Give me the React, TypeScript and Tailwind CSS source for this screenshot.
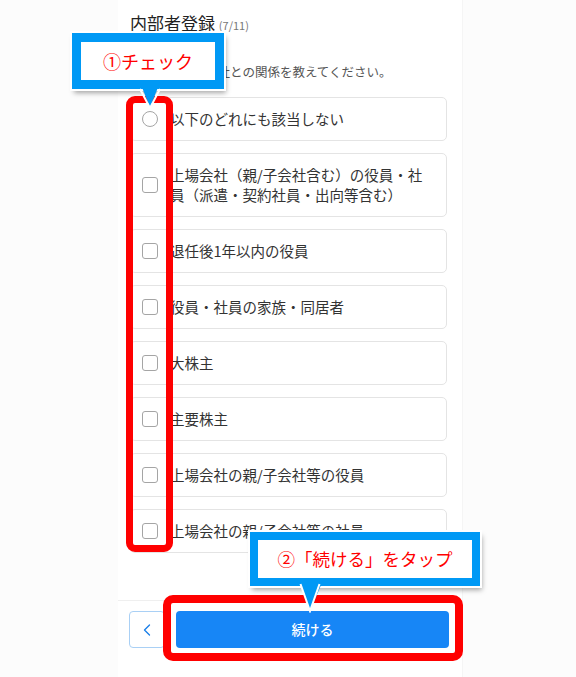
import { ChevronLeft } from 'lucide-react';

const options = [
  { label: '以下のどれにも該当しない', radio: true },
  { label: '上場会社（親/子会社含む）の役員・社員（派遣・契約社員・出向等含む）' },
  { label: '退任後1年以内の役員' },
  { label: '役員・社員の家族・同居者' },
  { label: '大株主' },
  { label: '主要株主' },
  { label: '上場会社の親/子会社等の役員' },
  { label: '上場会社の親/子会社等の社員' },
];

const App = () => {
  return (
    <div className="relative h-[677px] w-full overflow-hidden bg-[#fcfcfc] font-['Noto_Sans_CJK_JP',sans-serif]">
      {/* Panel */}
      <div className="ml-[118px] flex h-full w-[345px] flex-col border-r border-[#f5f5f5] bg-white">
        <div className="flex-1 overflow-hidden pl-3 pr-[15px] pt-[10px]">
          <h1 className="text-[17px] leading-[26px] font-normal text-[#222]">
            内部者登録 <span className="text-[11px] text-[#777]">(7/11)</span>
          </h1>
          <p className="mt-[25px] text-[12.5px] leading-[18px] text-[#555]">
            お客様と上場会社との関係を教えてください。
          </p>

          {/* Options */}
          <div className="mt-[16px] flex flex-col gap-3">
            {options.map((option, index) => (
              <label
                key={index}
                className="flex items-center gap-3 rounded-[5px] border border-[#e4e4e4] bg-white py-[11px] pl-[11px] pr-4"
              >
                {option.radio ? (
                  <span className="h-4 w-4 shrink-0 rounded-full border-[1.5px] border-[#a5a5a5] bg-white" />
                ) : (
                  <span className="h-4 w-4 shrink-0 rounded-[3px] border-[1.5px] border-[#a5a5a5] bg-white" />
                )}
                <span className="text-[14.5px] leading-[20px] text-[#333]">{option.label}</span>
              </label>
            ))}
          </div>
        </div>

        {/* Footer */}
        <div className="flex h-[77px] shrink-0 gap-[11px] border-t border-[#efefef] pl-[11px] pr-[13px] pt-[10px]">
          <button className="flex h-[37px] w-9 items-center justify-center rounded-[4px] border border-[#a9d0f5] bg-white text-[#1a7fe8]">
            <ChevronLeft className="h-5 w-5" strokeWidth={1.6} />
          </button>
          <button className="h-[37px] flex-1 rounded-[4px] bg-[#1786f6] text-[14px] font-medium text-white">
            続ける
          </button>
        </div>
      </div>

      {/* Red highlight boxes */}
      <div className="absolute left-[126px] top-[96px] h-[456px] w-[47px] rounded-[9px] border-[7px] border-[#ff0000]" />
      <div className="absolute left-[163px] top-[595px] h-[66px] w-[300px] rounded-[10px] border-[8px] border-[#ff0000]" />

      {/* Callout 1 */}
      <div className="absolute left-[72px] top-[33px] flex h-[56px] w-[152px] items-center justify-center border-[9px] border-[#0099f5] bg-white shadow-[2px_4px_5px_rgba(0,0,0,0.35)] outline-2 outline-white">
        <span className="text-[18px] leading-none text-[#ff0000]">①チェック</span>
      </div>
      <svg className="absolute left-[138px] top-[82px]" width="24" height="28" viewBox="0 0 24 28">
        <polygon points="2,0 22,0 12,26" fill="#0099f5" />
        <polyline points="2,7 12,26 22,7" fill="none" stroke="#fff" strokeWidth="2" />
      </svg>

      {/* Callout 2 */}
      <div className="absolute left-[250px] top-[532px] flex h-[54px] w-[230px] items-center justify-center border-[8px] border-[#0099f5] bg-white shadow-[2px_4px_5px_rgba(0,0,0,0.35)] outline-2 outline-white">
        <span className="text-[17.5px] leading-none text-[#ff0000]">②「続ける」をタップ</span>
      </div>
      <svg className="absolute left-[296px] top-[578px]" width="30" height="35" viewBox="0 0 30 35">
        <polygon points="2,0 28,0 14,33" fill="#0099f5" />
        <polyline points="4.5,6 14,33 23.5,6" fill="none" stroke="#fff" strokeWidth="2" />
      </svg>
    </div>
  );
};

export default App;
